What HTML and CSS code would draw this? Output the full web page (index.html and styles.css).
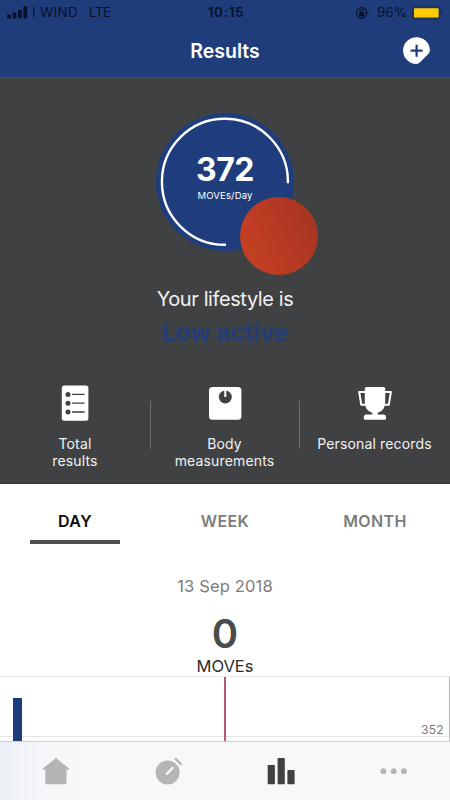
FILE: index.html
```html
<!DOCTYPE html>
<html lang="en">
<head>
    <meta charset="UTF-8">
    <meta name="viewport" content="width=device-width, initial-scale=1.0">
    <title>Results</title>
    <link rel="stylesheet" href="styles.css">
</head>
<body>
    <div class="app">
        <header>
            <div class="status-bar">
                <div class="carrier">
                    <svg width="21" height="13" viewBox="0 0 21 13">
                        <rect x="0" y="8.5" width="3.8" height="4" rx="1"/>
                        <rect x="5.6" y="6.5" width="3.8" height="6" rx="1"/>
                        <rect x="11" y="4" width="3.8" height="8.5" rx="1"/>
                        <rect x="16.4" y="0.3" width="3.8" height="12.2" rx="1"/>
                    </svg>
                    <span class="network">I WIND</span>
                    <span class="lte">LTE</span>
                </div>
                <span class="time">10:15</span>
                <div class="power">
                    <svg class="lock" width="14" height="14" viewBox="0 0 14 14">
                        <path d="M11.6 8.6A5.2 5.2 0 1 1 11.7 5.4" fill="none" stroke="#07102a" stroke-width="1.2"/>
                        <path d="M9.8 6h4l-2 2.5z"/>
                        <rect x="4" y="6.3" width="5.2" height="3.9" rx="0.5"/>
                        <path d="M5.2 6.5V5.2a1.4 1.4 0 0 1 2.8 0v1.3" fill="none" stroke="#07102a"/>
                    </svg>
                    <span class="percent">96%</span>
                    <svg width="32" height="14" viewBox="0 0 32 14">
                        <rect x="0.6" y="0.9" width="27.4" height="12" rx="2" fill="none" stroke="#172b50"/>
                        <rect x="2" y="2.3" width="24.6" height="9.3" rx="0.6" fill="#ffcc02"/>
                        <path d="M29.4 5v4q1.4-.6 1.4-2t-1.4-2" fill="#172b50"/>
                    </svg>
                </div>
            </div>
            <div class="title-bar">
                <h1>Results</h1>
                <svg class="add" width="28" height="28" viewBox="0 0 28 28">
                    <path d="M13.5 0.2A13.4 13.4 0 0 0 13.5 27Q15.4 27 17 25.3L25.5 16.8Q27 15 26.9 12.8A13.4 13.4 0 0 0 13.5 0.2z" fill="#fff"/>
                    <path d="M13.6 7.7v12M7.6 13.7h12" stroke="#1f3d7b" stroke-width="2.2"/>
                </svg>
            </div>
        </header>

        <section class="summary">
            <div class="gauge">
                <svg class="ring" width="138" height="138" viewBox="0 0 138 138">
                    <circle cx="69" cy="69" r="69" fill="#1f3d7c"/>
                    <path d="M131.9 70.3A63 63 0 1 0 70 131.8" fill="none" stroke="#fff" stroke-width="2.4"/>
                </svg>
                <b class="moves">372</b>
                <span class="moves-label">MOVEs/Day</span>
                <div class="dot"></div>
            </div>
            <p class="lifestyle">Your lifestyle is</p>
            <p class="level">Low active</p>

            <div class="shortcuts">
                <div class="shortcut">
                    <svg width="36" height="36" viewBox="0 0 36 36">
                        <rect x="4.8" y="0.4" width="26.6" height="35.4" rx="2.5" fill="#fff"/>
                        <g fill="#404142">
                            <circle cx="11" cy="9.4" r="2.5"/>
                            <circle cx="11" cy="18.2" r="2.5"/>
                            <circle cx="11" cy="27" r="2.5"/>
                        </g>
                        <path d="M15 9.4h12.6M15 18.2h12.6M15 27h12.6" stroke="#404142" stroke-width="1.3"/>
                    </svg>
                    <p>Total<br>results</p>
                </div>
                <div class="shortcut">
                    <svg width="36" height="36" viewBox="0 0 36 36">
                        <rect x="2" y="2" width="32.4" height="32.8" rx="3.5" fill="#fff"/>
                        <circle cx="18.3" cy="12" r="6.5" fill="#404142"/>
                        <path d="M18.3 4v8" stroke="#fff" stroke-width="2"/>
                    </svg>
                    <p>Body<br>measurements</p>
                </div>
                <div class="shortcut">
                    <svg width="36" height="36" viewBox="0 0 36 36">
                        <path d="M9.4 2Q7.8 2 7.8 3.6V17Q7.8 25.5 15.4 28V29.6H9.6Q6.8 29.6 6.8 32.4V33.4Q6.8 34.8 8.2 34.8H27.6Q29 34.8 29 33.4V32.4Q29 29.6 26.2 29.6H20.6V28Q28.2 25.5 28.2 17V3.6Q28.2 2 26.6 2z" fill="#fff"/>
                        <path d="M8 6.9H2.2L4.3 19.8H8.8M28 6.9H33.9L31.8 19.8H27.3" fill="none" stroke="#fff" stroke-width="2" stroke-linejoin="round"/>
                    </svg>
                    <p>Personal records</p>
                </div>
            </div>
        </section>

        <section class="history">
            <div class="tabs">
                <div class="tab active"><span>DAY</span></div>
                <div class="tab"><span>WEEK</span></div>
                <div class="tab"><span>MONTH</span></div>
            </div>
            <p class="date">13 Sep 2018</p>
            <p class="count">0</p>
            <p class="unit">MOVEs</p>
            <div class="chart">
                <div class="bar"></div>
                <div class="marker"></div>
                <span class="value">352</span>
            </div>
        </section>

        <nav>
            <div class="nav-item">
                <svg width="28" height="28" viewBox="0 0 28 28" fill="#b5b5b5">
                    <path d="M14 0L0.8 10.5V11.8H3.3V26.3H24.5V11.8H27.1V10.5z"/>
                </svg>
            </div>
            <div class="nav-item">
                <svg width="28" height="28" viewBox="0 0 28 28">
                    <circle cx="12.6" cy="14.4" r="12" fill="#b5b5b5"/>
                    <path d="M11.8 15.8L17.6 9.8" stroke="#f8f8f8" stroke-width="2.4" stroke-linecap="round"/>
                    <path d="M20.9 1.2L25.8 6" stroke="#b5b5b5" stroke-width="2.4" stroke-linecap="round"/>
                </svg>
            </div>
            <div class="nav-item">
                <svg width="28" height="28" viewBox="0 0 28 28" fill="#414141">
                    <rect x="0.7" y="7.1" width="7.2" height="19.2" rx="0.7"/>
                    <rect x="10.6" y="0.1" width="7.2" height="26.2" rx="0.7"/>
                    <rect x="20.4" y="12" width="7.2" height="14.3" rx="0.7"/>
                </svg>
            </div>
            <div class="nav-item">
                <svg width="28" height="28" viewBox="0 0 28 28" fill="#b5b5b5">
                    <circle cx="3.4" cy="13.2" r="2.9"/>
                    <circle cx="13.7" cy="13.2" r="2.9"/>
                    <circle cx="23.9" cy="13.2" r="2.9"/>
                </svg>
            </div>
        </nav>
    </div>
</body>
</html>
```
FILE: styles.css
```css
* {
    box-sizing: border-box;
}

body {
    margin: 0;
    font-family: Inter, "Liberation Sans", sans-serif;
    background-color: #fff;
}

h1, p {
    margin: 0;
}

svg {
    display: block;
}

.app {
    width: 450px;
    height: 800px;
    display: flex;
    flex-direction: column;
    overflow: hidden;
}

header {
    height: 77px;
    background-color: #1f3d7b;
}

.status-bar {
    height: 25px;
    display: grid;
    grid-template-columns: 1fr auto 1fr;
    align-items: center;
    padding: 0 6px 0 7px;
    font-size: 13px;
    line-height: 25px;
    color: #07102a;
    fill: #07102a;
}

.carrier {
    display: flex;
    align-items: center;
}

.network {
    margin-left: 4px;
    font-size: 13.5px;
    letter-spacing: 0.3px;
}

.lte {
    margin-left: 11px;
    letter-spacing: -0.3px;
}

.time {
    padding-left: 1px;
    font-weight: 600;
    font-size: 13.5px;
    letter-spacing: 0.7px;
}

.power {
    display: flex;
    justify-content: flex-end;
    align-items: center;
}

.percent {
    margin: 0 5px 0 8px;
    font-size: 13.5px;
}

.title-bar {
    height: 51px;
    display: grid;
    grid-template-columns: 1fr auto 1fr;
    align-items: center;
    padding: 0 19px;
}

h1 {
    grid-column: 2;
    font-size: 19.5px;
    font-weight: 600;
    color: #fff;
}

.add {
    justify-self: end;
}

.summary {
    height: 407px;
    background-color: #404142;
    border-top: 1px solid #4b4e55;
    border-bottom: 1px solid #343536;
    padding-top: 35px;
    text-align: center;
    color: #f2f2f2;
}

.gauge {
    position: relative;
    width: 138px;
    height: 138px;
    margin: 0 auto;
    display: flex;
    flex-direction: column;
    align-items: center;
    padding-top: 38px;
    color: #fff;
}

.ring {
    position: absolute;
    top: 0;
    left: 0;
}

.moves {
    position: relative;
    font-size: 32px;
    line-height: 38px;
    letter-spacing: -0.4px;
}

.moves-label {
    position: relative;
    font-size: 9.5px;
    line-height: 13px;
    letter-spacing: 0.15px;
}

/* overlaps the lower right edge of the gauge */
.dot {
    position: absolute;
    left: 84px;
    top: 84px;
    width: 78px;
    height: 78px;
    border-radius: 50%;
    background: linear-gradient(65deg, #c94224 0%, #b83a23 50%, #a13420 100%);
}

.lifestyle {
    margin-top: 35px;
    font-size: 20px;
    line-height: 26px;
    letter-spacing: -0.4px;
}

.level {
    margin-top: 4px;
    font-size: 24.5px;
    line-height: 32px;
    font-weight: 700;
    letter-spacing: -0.2px;
    color: #223d77;
}

.shortcuts {
    display: grid;
    grid-template-columns: 150px 149px 151px;
    margin-top: 37px;
}

.shortcut {
    position: relative;
    display: flex;
    flex-direction: column;
    align-items: center;
    font-size: 14px;
    line-height: 17px;
}

.shortcut p {
    margin-top: 14px;
    letter-spacing: 0.15px;
}

.shortcut + .shortcut::before {
    content: "";
    position: absolute;
    left: 0;
    top: 16px;
    width: 1px;
    height: 48px;
    background-color: #6c6d6e;
}

.history {
    height: 257px;
    text-align: center;
}

.tabs {
    display: grid;
    grid-template-columns: repeat(3, 1fr);
    height: 60px;
    font-size: 16px;
    font-weight: 600;
    line-height: 20px;
    letter-spacing: 0.4px;
    color: #7c7c7c;
}

.tab {
    margin: 0 30px;
    padding-top: 27px;
}

.tab.active {
    color: #0c0c0c;
    border-bottom: 4px solid #4f4f4f;
}

.date {
    margin-top: 32px;
    font-size: 16.5px;
    line-height: 20px;
    letter-spacing: 0.15px;
    color: #7c7c7c;
}

.count {
    margin-top: 17px;
    font-size: 40px;
    line-height: 42px;
    font-weight: 600;
    color: #4b4b4b;
}

.unit {
    margin-top: 2px;
    font-size: 16.5px;
    line-height: 19px;
    color: #2b2b2b;
}

.chart {
    position: relative;
    height: 65px;
    border-top: 1px solid #ececec;
    border-right: 1px solid #bdbdbd;
    display: flex;
    align-items: flex-end;
    justify-content: space-between;
    padding: 0 5px 0 13px;
    background: linear-gradient(#e4e4e4, #e4e4e4) 0 59px / 100% 1px no-repeat;
}

.bar {
    width: 9px;
    height: 43px;
    background-color: #1f3d7b;
}

.marker {
    position: absolute;
    left: 224px;
    top: 0;
    width: 2px;
    height: 64px;
    background-color: #b65872;
}

.value {
    font-size: 12px;
    line-height: 14px;
    padding-bottom: 4px;
    color: #7c7c7c;
    letter-spacing: 0.3px;
}

nav {
    height: 59px;
    display: grid;
    grid-template-columns: repeat(4, 1fr);
    padding-top: 16px;
    border-top: 1px solid #cfcfd3;
    background: linear-gradient(90deg, #eceff6 0, #f6f7fa 45px, #f8f8f8 120px, #f9f7f8 230px, #f8f8f8 260px);
}

.nav-item {
    display: flex;
    justify-content: center;
}
```
